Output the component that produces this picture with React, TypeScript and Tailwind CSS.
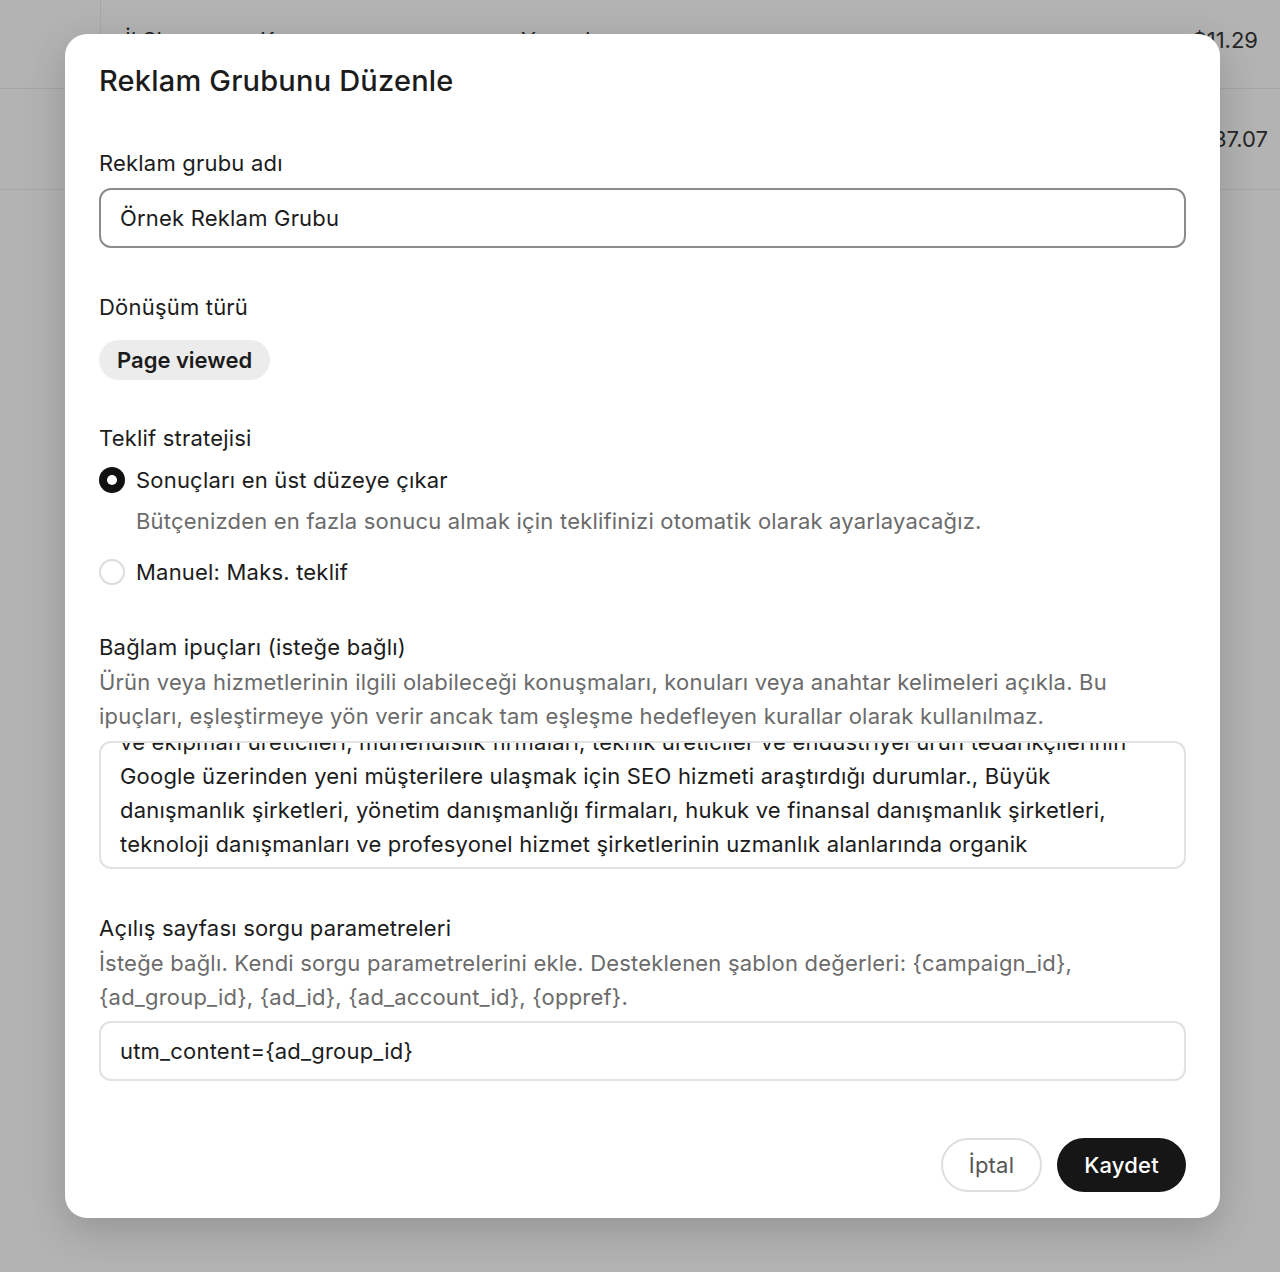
import React from "react";

const font = { fontFamily: "Inter, 'Noto Sans', sans-serif" };

const tableRows = [
  { name: "İl Showroom Kampanyası", status: "Yayında", spend: "$11.29" },
  { name: "Genel Arama", status: "Yayında", spend: "$37.07" },
];

const hintLines = [
  "ve ekipman üreticileri, mühendislik firmaları, teknik üreticiler ve endüstriyel ürün tedarikçilerinin",
  "Google üzerinden yeni müşterilere ulaşmak için SEO hizmeti araştırdığı durumlar., Büyük",
  "danışmanlık şirketleri, yönetim danışmanlığı firmaları, hukuk ve finansal danışmanlık şirketleri,",
  "teknoloji danışmanları ve profesyonel hizmet şirketlerinin uzmanlık alanlarında organik",
];

// Background table, dimmed by the overlay
const BackgroundTable = () => (
  <div className="w-full">
    {tableRows.map((row, i) => (
      <div
        key={i}
        className={`flex border-b border-[#a6a6a6] ${i === 0 ? "h-[89px]" : "h-[101px]"}`}
      >
        <div className="w-[100px] h-full" />
        <div
          className={`flex-1 flex h-full text-[22px] text-[#262626] ${
            i === 0 ? "border-l border-[#a6a6a6] items-start pt-[24px]" : "items-center"
          }`}
        >
          <div className="w-[400px] pl-[24px]">{row.name}</div>
          <div className="flex-1 flex items-center gap-2">
            <span className="w-3 h-3 rounded-full bg-[#555]" />
            {row.status}
          </div>
          <div className={i === 0 ? "pr-[22px]" : "pr-[12px]"}>{row.spend}</div>
        </div>
      </div>
    ))}
  </div>
);

const Radio = ({ checked }: { checked: boolean }) =>
  checked ? (
    <span className="w-[26px] h-[26px] rounded-full bg-[#111] flex items-center justify-center shrink-0">
      <span className="w-[10px] h-[10px] rounded-full bg-white" />
    </span>
  ) : (
    <span className="w-[26px] h-[26px] rounded-full border-2 border-[#dcdcdc] bg-white shrink-0" />
  );

export default function App() {
  return (
    <div
      className="relative w-[1280px] h-[1272px] overflow-hidden bg-[#b3b3b3]"
      style={font}
    >
      <BackgroundTable />

      {/* Modal */}
      <div className="absolute left-[65px] top-[34px] w-[1155px] h-[1184px] bg-white rounded-[22px] shadow-[0_12px_40px_rgba(0,0,0,0.18)] px-[34px] pt-[29px] pb-[26px] text-[#1c1c1c] tracking-[0.2px] flex flex-col">
        <h2 className="text-[29px] leading-[36px] font-medium">
          Reklam Grubunu Düzenle
        </h2>

        {/* Name */}
        <label className="mt-[49px] text-[22px] leading-[30px]">Reklam grubu adı</label>
        <div className="mt-[10px] h-[60px] rounded-[12px] border-2 border-[#8c8c8c] flex items-center px-[19px] text-[22px]">
          Örnek Reklam Grubu
        </div>

        {/* Conversion type */}
        <label className="mt-[44px] text-[22px] leading-[30px]">Dönüşüm türü</label>
        <div className="mt-[18px]">
          <span className="inline-flex items-center h-[40px] px-[18px] rounded-full bg-[#ececec] text-[22px] font-semibold tracking-normal">
            Page viewed
          </span>
        </div>

        {/* Bid strategy */}
        <label className="mt-[43px] text-[22px] leading-[30px]">Teklif stratejisi</label>
        <div className="mt-[12px] flex items-center gap-[11px] text-[22px] leading-[30px]">
          <Radio checked />
          <span>Sonuçları en üst düzeye çıkar</span>
        </div>
        <p className="mt-[11px] pl-[37px] text-[22px] leading-[30px] text-[#6b6b6b]">
          Bütçenizden en fazla sonucu almak için teklifinizi otomatik olarak ayarlayacağız.
        </p>
        <div className="mt-[21px] flex items-center gap-[11px] text-[22px] leading-[30px]">
          <Radio checked={false} />
          <span>Manuel: Maks. teklif</span>
        </div>

        {/* Context hints */}
        <label className="mt-[45px] text-[22px] leading-[30px]">
          Bağlam ipuçları (isteğe bağlı)
        </label>
        <p className="mt-[3px] text-[22px] leading-[34px] text-[#6b6b6b]">
          Ürün veya hizmetlerinin ilgili olabileceği konuşmaları, konuları veya anahtar kelimeleri açıkla. Bu
          <br />
          ipuçları, eşleştirmeye yön verir ancak tam eşleşme hedefleyen kurallar olarak kullanılmaz.
        </p>
        <div className="mt-[8px] h-[128px] rounded-[12px] border-2 border-[#e2e2e2] overflow-hidden px-[19px]">
          <div className="-mt-[18px] text-[22px] leading-[34px] whitespace-nowrap">
            {hintLines.map((line, i) => (
              <div key={i}>{line}</div>
            ))}
          </div>
        </div>

        {/* Query params */}
        <label className="mt-[44px] text-[22px] leading-[30px]">
          Açılış sayfası sorgu parametreleri
        </label>
        <p className="mt-[3px] text-[22px] leading-[34px] text-[#6b6b6b]">
          İsteğe bağlı. Kendi sorgu parametrelerini ekle. Desteklenen şablon değerleri: {"{campaign_id}"},
          <br />
          {"{ad_group_id}, {ad_id}, {ad_account_id}, {oppref}."}
        </p>
        <div className="mt-[7px] h-[60px] rounded-[12px] border-2 border-[#e2e2e2] flex items-center px-[19px] text-[22px]">
          {"utm_content={ad_group_id}"}
        </div>

        {/* Footer */}
        <div className="mt-auto flex justify-end gap-[15px]">
          <button className="h-[54px] w-[101px] rounded-full border-2 border-[#dedede] text-[22px] text-[#555]">
            İptal
          </button>
          <button className="h-[54px] w-[129px] rounded-full bg-[#161616] text-white text-[22px] font-medium">
            Kaydet
          </button>
        </div>
      </div>
    </div>
  );
}
